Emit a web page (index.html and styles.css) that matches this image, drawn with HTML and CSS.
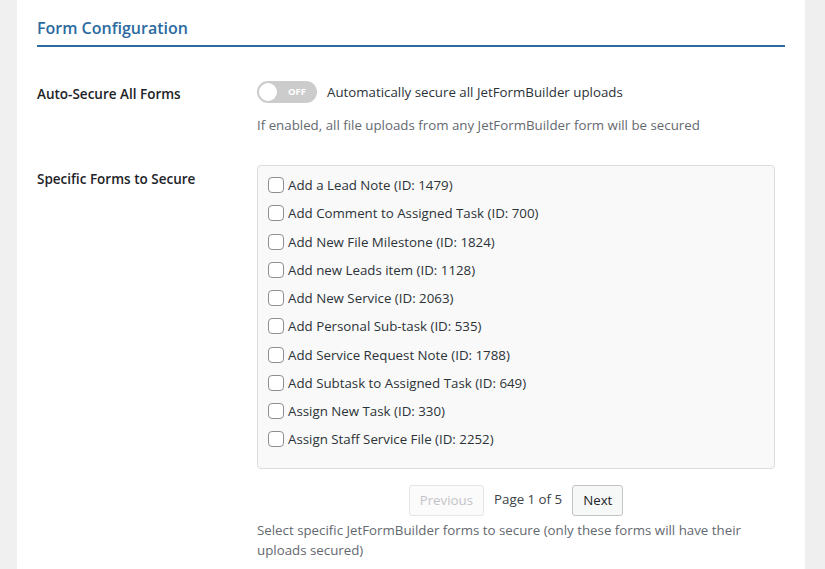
FILE: index.html
```html
<!DOCTYPE html>
<html>
<head>
<meta charset="utf-8">
<link rel="stylesheet" href="styles.css">
</head>
<body>
<div class="page">
  <div class="card">
    <h2 class="section-title">Form Configuration</h2>
    <div class="form-table">
      <div class="row row-auto">
        <div class="label">Auto-Secure All Forms</div>
        <div class="field">
          <div class="toggle-line">
            <span class="toggle"><span class="knob"></span><span class="toggle-text">OFF</span></span>
            <span class="toggle-label">Automatically secure all JetFormBuilder uploads</span>
          </div>
          <p class="desc">If enabled, all file uploads from any JetFormBuilder form will be secured</p>
        </div>
      </div>
      <div class="row row-forms">
        <div class="label">Specific Forms to Secure</div>
        <div class="field">
          <div class="forms-box">
            <label class="item"><span class="cb"></span>Add a Lead Note (ID: 1479)</label>
            <label class="item"><span class="cb"></span>Add Comment to Assigned Task (ID: 700)</label>
            <label class="item"><span class="cb"></span>Add New File Milestone (ID: 1824)</label>
            <label class="item"><span class="cb"></span>Add new Leads item (ID: 1128)</label>
            <label class="item"><span class="cb"></span>Add New Service (ID: 2063)</label>
            <label class="item"><span class="cb"></span>Add Personal Sub-task (ID: 535)</label>
            <label class="item"><span class="cb"></span>Add Service Request Note (ID: 1788)</label>
            <label class="item"><span class="cb"></span>Add Subtask to Assigned Task (ID: 649)</label>
            <label class="item"><span class="cb"></span>Assign New Task (ID: 330)</label>
            <label class="item"><span class="cb"></span>Assign Staff Service File (ID: 2252)</label>
          </div>
          <div class="pager">
            <span class="btn btn-disabled">Previous</span>
            <span class="page-info">Page 1 of 5</span>
            <span class="btn">Next</span>
          </div>
          <p class="desc desc-forms">Select specific JetFormBuilder forms to secure (only these forms will have their uploads secured)</p>
        </div>
      </div>
    </div>
  </div>
  <div class="side"></div>
</div>
</body>
</html>
```

FILE: styles.css
```css
html, body {
  margin: 0;
  padding: 0;
  background: #f0f0f1;
  font-family: "Open Sans", "Noto Sans", sans-serif;
  font-size: 13.3px;
  color: #1d2327;
}

.page {
  display: flex;
  height: 569px;
  overflow: hidden;
  padding-left: 17px;
}

.card {
  width: 748px;
  background: #fff;
  padding: 0 20px;
  flex: none;
}

.side {
  flex: 1;
  background: #efefef;
}

.section-title {
  margin: 0;
  padding-top: 16px;
  height: 29px;
  line-height: 24px;
  font-size: 16px;
  font-weight: 600;
  color: #2c6aa0;
  border-bottom: 2px solid #2c6aa0;
}

.form-table {
  display: flex;
  flex-direction: column;
}

.row {
  display: grid;
  grid-template-columns: 220px 518px;
}

.row-auto {
  padding-top: 34px;
}

.row-forms {
  padding-top: 30px;
}

.label {
  font-size: 13.5px;
  font-weight: 600;
  color: #1d2327;
  line-height: 20px;
}

.row-auto .label {
  padding-top: 3px;
}

.row-forms .label {
  padding-top: 4px;
}

.toggle-line {
  display: flex;
  align-items: center;
  gap: 10px;
  height: 22px;
}

.toggle {
  position: relative;
  width: 60px;
  height: 22px;
  border-radius: 11px;
  background: #cccccc;
  flex: none;
}

.knob {
  position: absolute;
  left: 2px;
  top: 2px;
  width: 18px;
  height: 18px;
  border-radius: 50%;
  background: #fff;
}

.toggle-text {
  position: absolute;
  left: 31px;
  top: 0;
  line-height: 22px;
  font-size: 9.5px;
  font-weight: 700;
  color: #fff;
}

.toggle-label {
  color: #2c3338;
  line-height: 20px;
}

.desc {
  margin: 12px 0 0;
  color: #646970;
  line-height: 20px;
}

.forms-box {
  background: #f9f9f9;
  border: 1px solid #dcdcde;
  border-radius: 4px;
  padding: 9px 10px 10px;
  display: flex;
  flex-direction: column;
}

.item {
  display: flex;
  align-items: center;
  height: 20px;
  margin-bottom: 8.25px;
  line-height: 20px;
  color: #2c3338;
}

.cb {
  width: 14px;
  height: 14px;
  border: 1px solid #8c8f94;
  border-radius: 4px;
  background: #fff;
  margin-right: 4px;
  flex: none;
}

.pager {
  display: flex;
  align-items: center;
  justify-content: center;
  gap: 10px;
  margin-top: 16px;
}

.btn {
  display: inline-block;
  height: 29px;
  line-height: 29px;
  padding: 0 10px;
  border: 1px solid #c3c4c7;
  border-radius: 3px;
  background: #f6f7f7;
  color: #1d2327;
  font-size: 13.3px;
}

.btn-disabled {
  color: #c3c4c7;
  border-color: #e5e5e5;
  background: #fbfbfb;
}

.page-info {
  color: #3c434a;
  line-height: 20px;
  margin-top: -3px;
}

.desc-forms {
  margin-top: 4px;
  width: 500px;
}
```
